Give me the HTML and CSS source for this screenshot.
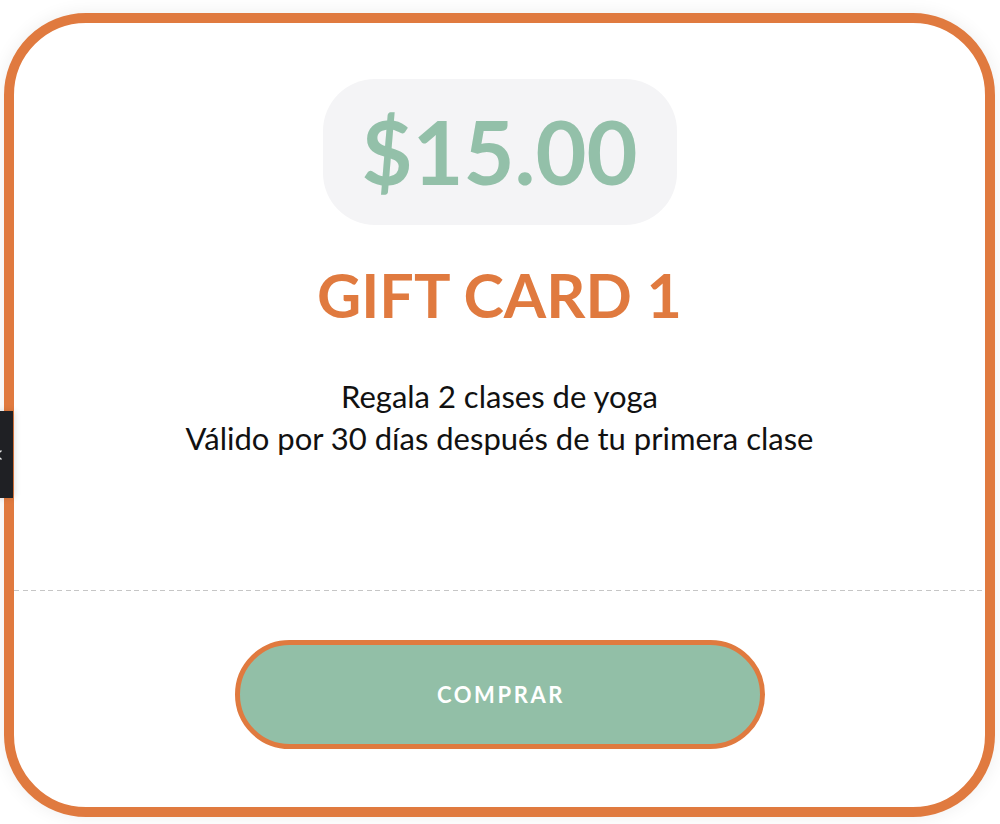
FILE: index.html
```html
<!DOCTYPE html>
<html lang="es">
<head>
<meta charset="utf-8">
<title>Gift Card 1</title>
<link rel="stylesheet" href="styles.css">
</head>
<body>
<div class="page">
  <div class="card">
    <div class="card-body">
      <div class="price-pill"><span class="price">$15.00</span></div>
      <h2 class="title">GIFT CARD 1</h2>
      <p class="desc">Regala 2 clases de yoga<br>Válido por 30 días después de tu primera clase</p>
    </div>
    <div class="divider"></div>
    <div class="card-footer">
      <button class="buy">COMPRAR</button>
    </div>
  </div>
</div>
<div class="side-tab">
  <svg class="tab-icon" width="8" height="10" viewBox="0 0 8 10"><path d="M7 1 L2 5 L7 9" fill="none" stroke="#e6e6e6" stroke-width="1.6" stroke-linecap="round"/></svg>
</div>
</body>
</html>
```
FILE: styles.css
```css
* { box-sizing: border-box; }
html, body { margin: 0; padding: 0; }
body {
  background: #ffffff;
  font-family: Lato, "Open Sans", sans-serif;
  width: 1000px;
  height: 824px;
  overflow: hidden;
}
.page {
  padding: 13px 5px 7px 4px;
}
.card {
  width: 991px;
  height: 804px;
  border: 10px solid #e07a3f;
  border-radius: 82px;
  background: #fff;
  box-shadow: 0 0 18px rgba(0, 0, 0, 0.07);
  display: flex;
  flex-direction: column;
}
.card-body {
  flex: 0 0 567px;
  display: flex;
  flex-direction: column;
  align-items: center;
  padding-top: 56px;
}
.price-pill {
  background: #f4f4f6;
  border-radius: 52px;
  width: 354px;
  height: 146px;
  display: flex;
  align-items: center;
  justify-content: center;
}
.price {
  font-size: 88px;
  font-weight: 700;
  color: #93c0a9;
  line-height: 1.2;
}
.title {
  margin: 33px 0 0;
  font-size: 61px;
  font-weight: 700;
  color: #e07a3f;
  line-height: 1.2;
}
.desc {
  margin: 44px 0 0;
  font-size: 31px;
  line-height: 42px;
  color: #111111;
  text-align: center;
}
.divider {
  height: 1px;
  background: repeating-linear-gradient(to right, #c6c6c6 0 5px, transparent 5px 8.6px);
}
.card-footer {
  flex: 1;
  display: flex;
  justify-content: center;
  padding-top: 49px;
}
.buy {
  width: 530px;
  height: 109px;
  border: 5px solid #e07a3f;
  border-radius: 56px;
  background: #92bfa7;
  color: #fff;
  font-family: Lato, "Open Sans", sans-serif;
  font-size: 22px;
  font-weight: 700;
  letter-spacing: 2.6px;
  padding: 0 0 0 3px;
}
.side-tab {
  position: absolute;
  left: -20px;
  top: 411px;
  width: 33px;
  height: 87px;
  background: #1f2024;
  box-shadow: 2px 0 6px rgba(0, 0, 0, 0.12);
  display: flex;
  align-items: center;
}
.tab-icon {
  margin-left: 14px;
}
```
